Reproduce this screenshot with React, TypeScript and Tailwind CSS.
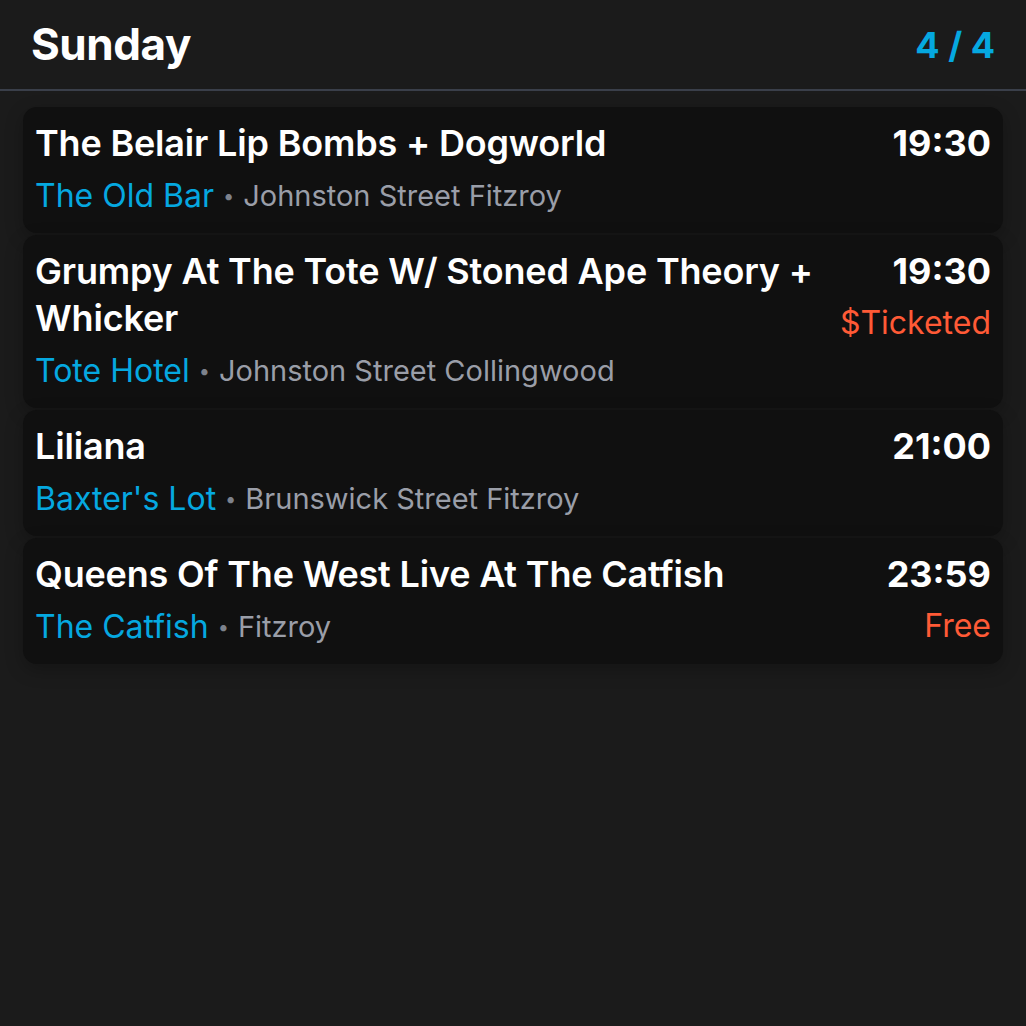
import React from 'react';

interface Gig {
  title: string;
  venue: string;
  address: string;
  time: string;
  price?: string;
}

const gigs: Gig[] = [
  { title: 'The Belair Lip Bombs + Dogworld', venue: 'The Old Bar', address: 'Johnston Street Fitzroy', time: '19:30' },
  {
    title: 'Grumpy At The Tote W/ Stoned Ape Theory + Whicker',
    venue: 'Tote Hotel',
    address: 'Johnston Street Collingwood',
    time: '19:30',
    price: '$Ticketed',
  },
  { title: 'Liliana', venue: "Baxter's Lot", address: 'Brunswick Street Fitzroy', time: '21:00' },
  { title: 'Queens Of The West Live At The Catfish', venue: 'The Catfish', address: 'Fitzroy', time: '23:59', price: 'Free' },
];

export default function App() {
  return (
    <div className="min-h-screen w-full bg-[#1b1b1b] text-white font-['Inter','Noto_Sans',sans-serif]">
      {/* Header */}
      <header className="flex items-center justify-between h-[91px] pl-[31px] pr-[31px] border-b-2 border-[#3a3f4a]">
        <h1 className="text-[44px] font-bold tracking-[-0.01em] leading-none mb-[2px]">Sunday</h1>
        <span className="text-[36px] font-bold text-[#05a8e0] leading-none">4 / 4</span>
      </header>

      {/* Gig list */}
      <div className="flex flex-col gap-[2px] px-[23px] pt-[16px]">
        {gigs.map((gig) => (
          <div
            key={gig.title}
            className="flex items-start justify-between gap-4 rounded-[14px] bg-[#101010] pl-[12px] pr-[12px] pt-[13px] pb-[15px] shadow-[0_6px_18px_rgba(0,0,0,0.25)]"
          >
            <div className="flex flex-col min-w-0">
              <div className="text-[36px] font-semibold leading-[47px] tracking-[-0.005em]">{gig.title}</div>
              <div className="flex items-center mt-[7px] text-[32px] leading-[44px]">
                <span className="text-[#05a8e0]">{gig.venue}</span>
                <span className="mx-[9px] text-[20px] text-[#7d828c]">•</span>
                <span className="text-[#9a9ea8] text-[29px]">{gig.address}</span>
              </div>
            </div>
            <div className="flex flex-col items-end shrink-0">
              <div className="text-[36px] font-bold leading-[47px]">{gig.time}</div>
              {gig.price && <div className="mt-[6px] text-[32px] text-[#ff5a36] leading-[44px]">{gig.price}</div>}
            </div>
          </div>
        ))}
      </div>
    </div>
  );
}
